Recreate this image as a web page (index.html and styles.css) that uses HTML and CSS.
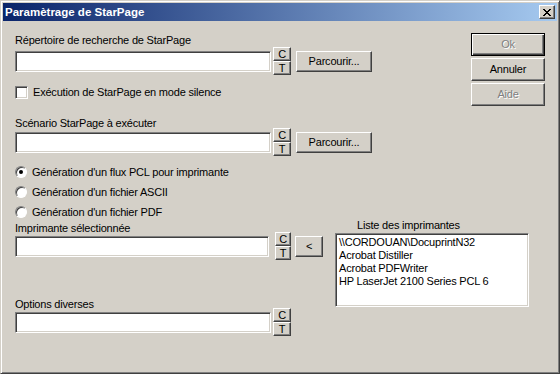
FILE: index.html
```html
<!DOCTYPE html>
<html lang="fr">
<head>
    <meta charset="UTF-8">
    <title>Paramètrage de StarPage</title>
    <link rel="stylesheet" href="styles.css">
</head>
<body>

    <div class="window">
        <div class="titlebar">
            <span class="title">Paramètrage de StarPage</span>
            <button class="close-btn" type="button">
                <svg width="8" height="7" viewBox="0 0 8 7" shape-rendering="crispEdges">
                    <path fill="#000" d="M0 0h2v1H0zM6 0h2v1H6zM1 1h2v1H1zM5 1h2v1H5zM2 2h4v1H2zM3 3h2v1H3zM2 4h4v1H2zM1 5h2v1H1zM5 5h2v1H5zM0 6h2v1H0zM6 6h2v1H6z"/>
                </svg>
            </button>
        </div>

        <div class="content">
            <div class="top">
                <div class="upper-form">
                    <!-- Répertoire -->
                    <div class="label label-first">Répertoire de recherche de StarPage</div>
                    <div class="input-row">
                        <input type="text" class="edit">
                        <div class="ct">
                            <button class="ct-btn" type="button">C</button>
                            <button class="ct-btn" type="button">T</button>
                        </div>
                        <button class="btn browse" type="button">Parcourir...</button>
                    </div>

                    <label class="check-row">
                        <span class="checkbox"></span>
                        Exécution de StarPage en mode silence
                    </label>

                    <!-- Scénario -->
                    <div class="label label-second">Scénario StarPage à exécuter</div>
                    <div class="input-row">
                        <input type="text" class="edit">
                        <div class="ct">
                            <button class="ct-btn" type="button">C</button>
                            <button class="ct-btn" type="button">T</button>
                        </div>
                        <button class="btn browse" type="button">Parcourir...</button>
                    </div>

                    <!-- Type de génération -->
                    <div class="radios">
                        <label class="radio-row"><span class="radio checked"></span>Génération d'un flux PCL pour imprimante</label>
                        <label class="radio-row"><span class="radio"></span>Génération d'un fichier ASCII</label>
                        <label class="radio-row"><span class="radio"></span>Génération d'un fichier PDF</label>
                    </div>
                </div>

                <div class="actions">
                    <button class="btn default disabled" type="button">Ok</button>
                    <button class="btn" type="button">Annuler</button>
                    <button class="btn disabled" type="button">Aide</button>
                </div>
            </div>

            <div class="bottom">
                <div class="lower-form">
                    <div class="label label-third">Imprimante sélectionnée</div>
                    <div class="input-row">
                        <input type="text" class="edit edit-short">
                        <div class="ct ct-narrow">
                            <button class="ct-btn" type="button">C</button>
                            <button class="ct-btn" type="button">T</button>
                        </div>
                        <button class="btn pick" type="button">&lt;</button>
                    </div>

                    <div class="label label-fourth">Options diverses</div>
                    <div class="input-row">
                        <input type="text" class="edit">
                        <div class="ct">
                            <button class="ct-btn" type="button">C</button>
                            <button class="ct-btn" type="button">T</button>
                        </div>
                    </div>
                </div>

                <div class="printers">
                    <div class="label printers-label">Liste des imprimantes</div>
                    <ul class="listbox">
                        <li>\\CORDOUAN\DocuprintN32</li>
                        <li>Acrobat Distiller</li>
                        <li>Acrobat PDFWriter</li>
                        <li>HP LaserJet 2100 Series PCL 6</li>
                    </ul>
                </div>
            </div>
        </div>
    </div>

</body>
</html>
```

FILE: styles.css
```css
* {
    box-sizing: border-box;
}

body {
    margin: 0;
    font-family: "Liberation Sans", Arial, sans-serif;
    font-size: 11px;
    letter-spacing: -0.2px;
    color: #000;
    background-color: #d4d0c8;
}

button,
input {
    font: inherit;
    letter-spacing: inherit;
    color: inherit;
    margin: 0;
    padding: 0;
}

/* Window frame */
.window {
    width: 560px;
    height: 374px;
    padding: 2px;
    background-color: #d4d0c8;
    border: 1px solid;
    border-color: #d4d0c8 #404040 #404040 #d4d0c8;
    box-shadow: inset 1px 1px #fff, inset -1px -1px #808080;
}

.titlebar {
    height: 18px;
    display: flex;
    align-items: center;
    justify-content: space-between;
    padding: 0 2px 0 2px;
    background: linear-gradient(to right, #0a246a, #a6caf0);
    color: #fff;
    font-size: 11.5px;
    font-weight: bold;
    letter-spacing: 0;
}

.close-btn {
    width: 16px;
    height: 14px;
    display: flex;
    align-items: center;
    justify-content: center;
    background-color: #d4d0c8;
    border: 1px solid;
    border-color: #fff #404040 #404040 #fff;
    box-shadow: inset -1px -1px #808080;
}

/* Classic 3D buttons */
.btn,
.ct-btn {
    background-color: #d4d0c8;
    border: 1px solid;
    border-color: #fff #404040 #404040 #fff;
    box-shadow: inset -1px -1px #808080, inset 1px 1px #d4d0c8;
    text-align: center;
    line-height: 1;
}

.btn.default {
    border-color: #000;
    box-shadow: inset 1px 1px #fff, inset -1px -1px #404040, inset -2px -2px #808080;
}

.btn.disabled {
    color: #808080;
    text-shadow: 1px 1px 0 #fff;
}

/* Layout */
.content {
    padding: 12px 12px 0 12px;
}

.top {
    display: flex;
    align-items: flex-start;
}

.upper-form {
    padding-top: 1px;
}

.actions {
    margin-left: auto;
    display: flex;
    flex-direction: column;
    gap: 2px;
}

.actions .btn {
    width: 74px;
    height: 23px;
}

.label {
    height: 13px;
    line-height: 13px;
    white-space: nowrap;
}

.label-first {
    margin-bottom: 4px;
}

.label-second {
    margin-top: 18px;
    margin-bottom: 2px;
}

.label-third {
    margin-bottom: 1px;
}

.label-fourth {
    margin-top: 41px;
    margin-bottom: 1px;
}

.input-row {
    display: flex;
    align-items: center;
    height: 21px;
}

.edit {
    width: 256px;
    height: 21px;
    background-color: #fff;
    border: 1px solid;
    border-color: #808080 #fff #fff #808080;
    box-shadow: inset 1px 1px #404040, inset -1px -1px #d4d0c8;
    outline: none;
}

.edit-short {
    width: 254px;
}

.ct {
    align-self: flex-start;
    display: flex;
    flex-direction: column;
    margin-top: -4px;
    margin-left: 2px;
}

.ct-btn {
    width: 18px;
    height: 14px;
}

.ct-narrow {
    margin-left: 6px;
}

.ct-narrow .ct-btn {
    width: 16px;
}

.browse {
    margin-left: 5px;
    width: 76px;
    height: 21px;
}

.pick {
    margin-left: 4px;
    width: 28px;
    height: 21px;
}

/* Checkbox and radios */
.check-row {
    display: flex;
    align-items: center;
    gap: 5px;
    height: 13px;
    line-height: 13px;
    margin-top: 14px;
    white-space: nowrap;
}

.checkbox {
    width: 13px;
    height: 13px;
    background-color: #fff;
    border: 1px solid;
    border-color: #808080 #fff #fff #808080;
    box-shadow: inset 1px 1px #404040, inset -1px -1px #d4d0c8;
}

.radios {
    margin-top: 11px;
    display: flex;
    flex-direction: column;
    gap: 4px;
}

.radio-row {
    display: flex;
    align-items: center;
    gap: 5px;
    height: 16px;
    white-space: nowrap;
}

.radio {
    position: relative;
    width: 12px;
    height: 12px;
    border-radius: 50%;
    background-color: #fff;
    border: 1px solid;
    border-color: #808080 #fff #fff #808080;
    box-shadow: inset 1px 1px #404040;
}

.radio.checked::after {
    content: "";
    position: absolute;
    left: 3px;
    top: 3px;
    width: 4px;
    height: 4px;
    border-radius: 50%;
    background-color: #000;
}

/* Printer list */
.bottom {
    display: flex;
    align-items: flex-start;
    margin-top: 2px;
}

.printers {
    margin-left: 12px;
    margin-top: -3px;
}

.printers-label {
    padding-left: 22px;
    margin-bottom: 1px;
}

.listbox {
    list-style: none;
    margin: 0;
    width: 194px;
    height: 74px;
    padding: 2px 3px;
    background-color: #fff;
    border: 1px solid;
    border-color: #808080 #fff #fff #808080;
    box-shadow: inset 1px 1px #404040, inset -1px -1px #d4d0c8;
}

.listbox li {
    line-height: 13px;
    white-space: nowrap;
}
```
